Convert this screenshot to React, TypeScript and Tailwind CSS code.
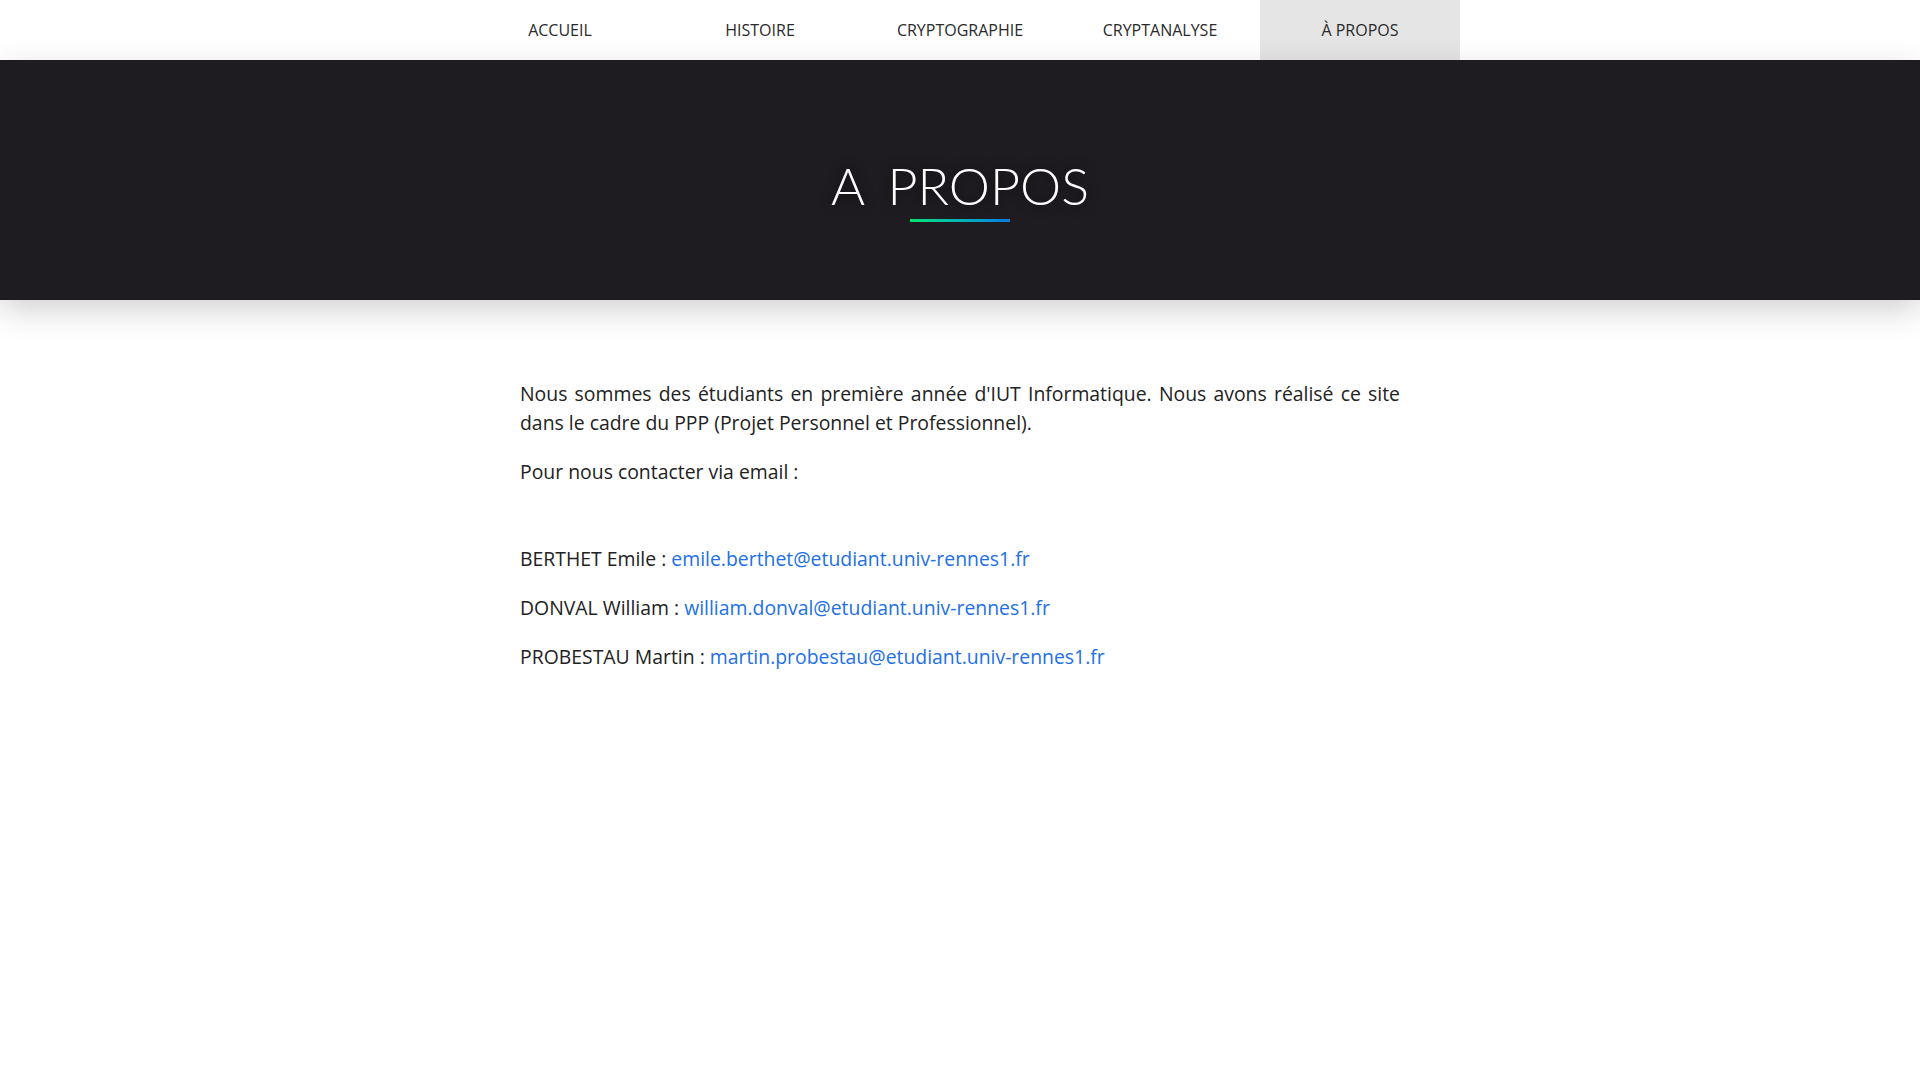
const navItems = ['ACCUEIL', 'HISTOIRE', 'CRYPTOGRAPHIE', 'CRYPTANALYSE', 'À PROPOS'];

const contacts = [
  { name: 'BERTHET Emile', email: 'emile.berthet@etudiant.univ-rennes1.fr' },
  { name: 'DONVAL William', email: 'william.donval@etudiant.univ-rennes1.fr' },
  { name: 'PROBESTAU Martin', email: 'martin.probestau@etudiant.univ-rennes1.fr' },
];

const App = () => {
  return (
    <div className="min-h-screen bg-white font-['Open_Sans',sans-serif] text-[#222]">
      {/* Top nav */}
      <nav className="h-[60px] bg-white flex justify-center">
        {navItems.map((item, i) => (
          <a
            key={item}
            href="#"
            className={`w-[200px] h-full flex items-center justify-center text-[16px] text-[#2a2a2a] ${
              i === navItems.length - 1 ? 'bg-[#e5e5e5]' : ''
            }`}
          >
            {item}
          </a>
        ))}
      </nav>

      {/* Header band */}
      <header className="h-[240px] bg-[#1e1c21] flex flex-col items-center justify-center shadow-[0_10px_30px_rgba(0,0,0,0.18)] relative z-10">
        <h1 className="mt-[20px] text-[52px] leading-none font-light text-white [word-spacing:10px] font-['Lato',sans-serif] [text-shadow:0_0_12px_rgba(0,0,0,0.6)]">
          A PROPOS
        </h1>
        <div className="mt-[8px] w-[100px] h-[3px] bg-gradient-to-r from-[#00e46a] to-[#1479e6]" />
      </header>

      {/* Content */}
      <main className="w-[880px] mx-auto pt-[79px] text-[19.4px] leading-[29px]">
        <p className="text-justify">
          Nous sommes des étudiants en première année d'IUT Informatique. Nous avons réalisé ce site dans le cadre du PPP (Projet Personnel et Professionnel).
        </p>
        <p className="mt-[20px]">Pour nous contacter via email :</p>
        <div className="mt-[58px] space-y-[20px]">
          {contacts.map((c) => (
            <p key={c.email}>
              {c.name} :{' '}
              <a href="#" className="text-[#2270e6]">
                {c.email}
              </a>
            </p>
          ))}
        </div>
      </main>
    </div>
  );
};

export default App;
